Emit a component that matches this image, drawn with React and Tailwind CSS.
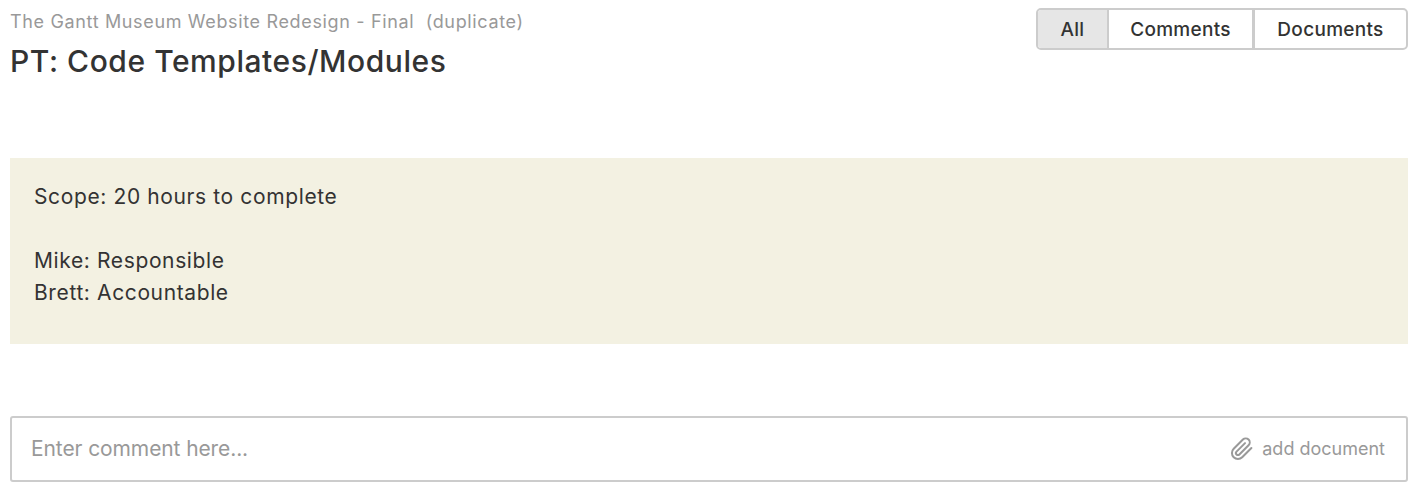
import React from "react";

export default function App() {
  return (
    <div className="w-[1419px] h-[491px] bg-white overflow-hidden font-['Inter','Liberation_Sans',sans-serif] text-[#333]">
      <div className="flex justify-between pl-[10px] pr-[11px]">
        <div className="pt-[11px]">
          <div className="text-[18px] leading-[22px] text-[#999] tracking-[0.65px] whitespace-pre">The Gantt Museum Website Redesign - Final  (duplicate)</div>
          <h1 className="mt-[10px] text-[30px] leading-[36px] font-medium text-[#333] tracking-[0.55px]">PT: Code Templates/Modules</h1>
        </div>
        <div className="mt-[8px] h-[42px] flex rounded-[5px] border-2 border-[#ccc] overflow-hidden text-[19px] font-medium text-[#333] tracking-[0.3px]">
          <div className="w-[71px] pt-[2px] flex items-center justify-center bg-[#e6e6e6] border-r-2 border-[#ccc]">All</div>
          <div className="w-[146px] pt-[2px] flex items-center justify-center border-r-[3px] border-[#ccc]">Comments</div>
          <div className="w-[151px] pt-[2px] flex items-center justify-center">Documents</div>
        </div>
      </div>
      <div className="mt-[79px] mx-[10px] w-[1398px] h-[186px] bg-[#f3f1e2] px-[24px] pt-[23px] text-[21px] leading-[32px] text-[#333] tracking-[0.62px]">
        <p>Scope: 20 hours to complete</p>
        <p className="mt-[32px]">Mike: Responsible</p>
        <p>Brett: Accountable</p>
      </div>
      <div className="mt-[72px] mx-[10px] w-[1398px] h-[66px] border-2 border-[#ccc] rounded-[3px] flex items-center justify-between pl-[19px] pr-[21px]">
        <span className="text-[21px] text-[#999] tracking-[-0.1px]">Enter comment here...</span>
        <div className="flex items-center gap-[8px] text-[18px] text-[#999] -mt-[2px]">
          <svg width="24" height="24" viewBox="0 0 24 24" fill="none" stroke="#999" strokeWidth="2" strokeLinecap="round" strokeLinejoin="round" className="mt-[2px]">
            <path d="M21.4 11.05l-9.2 9.2a6 6 0 0 1-8.5-8.49l9.2-9.2a4 4 0 0 1 5.66 5.66l-9.2 9.2a2 2 0 0 1-2.83-2.83l8.49-8.48" />
          </svg>
          <span>add document</span>
        </div>
      </div>
    </div>
  );
}
